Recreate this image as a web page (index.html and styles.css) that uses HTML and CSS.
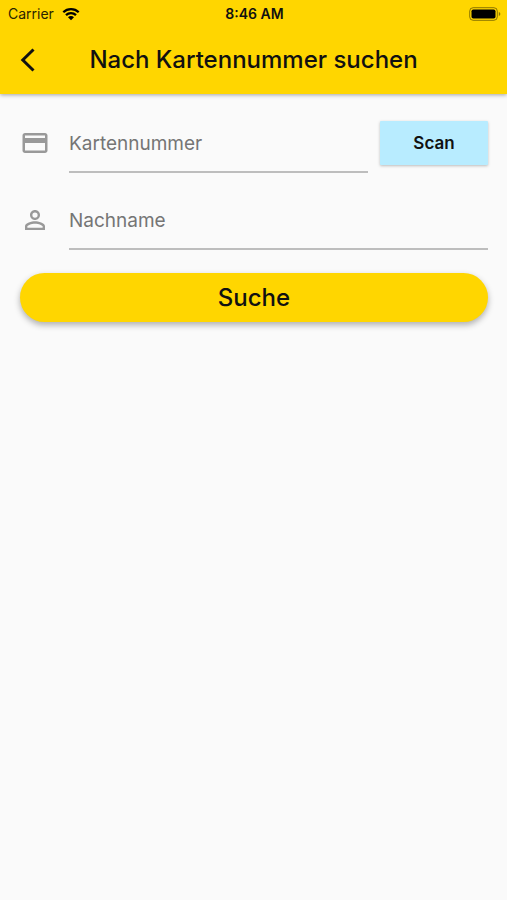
FILE: index.html
```html
<!DOCTYPE html>
<html lang="de">
<head>
<meta charset="utf-8">
<meta name="viewport" content="width=device-width, initial-scale=1">
<title>Nach Kartennummer suchen</title>
<link rel="stylesheet" href="styles.css">
</head>
<body>
<header class="top">
  <div class="status">
    <div class="carrier">
      <span>Carrier</span>
      <svg class="wifi" viewBox="0 0 18 14" aria-hidden="true">
        <path d="M1.3 5.2a11 11 0 0 1 15.4 0M4 8.1a7.1 7.1 0 0 1 10 0" fill="none" stroke="currentColor" stroke-width="2.3"/>
        <path d="M9 13.2 6 10.3a4.2 4.2 0 0 1 6 0z" fill="currentColor"/>
      </svg>
    </div>
    <span class="clock">8:46 AM</span>
    <svg class="battery" viewBox="0 0 32 14" aria-hidden="true">
      <rect x=".7" y=".7" width="27.6" height="12.6" rx="3.5" fill="none" stroke="currentColor" opacity=".45"/>
      <rect x="2.5" y="2.5" width="24" height="9" rx="1.8" fill="currentColor"/>
      <path d="M29.8 5v4q1.6-.6 1.6-2t-1.6-2z" fill="currentColor" opacity=".45"/>
    </svg>
  </div>
  <div class="bar">
    <button class="back" type="button" aria-label="Zurück">
      <svg viewBox="0 0 16 24" aria-hidden="true"><path d="M13.5 1.500 2.800 12l10.700 10.500" fill="none" stroke="currentColor" stroke-width="3"/></svg>
    </button>
    <h1 class="title">Nach Kartennummer suchen</h1>
  </div>
</header>
<main>
  <form class="form">
    <div class="row">
      <label class="icon" for="card" aria-label="Kartennummer">
        <svg viewBox="0 0 24 24" aria-hidden="true"><path fill="currentColor" d="M20 4H4c-1.11 0-1.99.89-1.99 2L2 18c0 1.11.89 2 2 2h16c1.11 0 2-.89 2-2V6c0-1.11-.89-2-2-2zm0 14H4v-6h16v6zm0-10H4V6h16v2z"/></svg>
      </label>
      <input class="field" id="card" type="text" placeholder="Kartennummer">
      <button class="scan" type="button">Scan</button>
    </div>
    <div class="row">
      <label class="icon" for="name" aria-label="Nachname">
        <svg viewBox="0 0 24 24" aria-hidden="true"><path fill="currentColor" d="M12 5.9a2.1 2.1 0 1 1 0 4.2 2.1 2.1 0 0 1 0-4.2m0 9c2.97 0 6.1 1.46 6.1 2.1v1.1H5.9V17c0-.64 3.13-2.1 6.1-2.1M12 4C9.79 4 8 5.79 8 8s1.79 4 4 4 4-1.79 4-4-1.79-4-4-4zm0 9c-2.67 0-8 1.34-8 4v3h16v-3c0-2.66-5.33-4-8-4z"/></svg>
      </label>
      <input class="field" id="name" type="text" placeholder="Nachname">
    </div>
    <button class="submit" type="button">Suche</button>
  </form>
</main>
</body>
</html>
```
FILE: styles.css
```css
* {
  box-sizing: border-box;
}

body {
  margin: 0;
  background: #fafafa;
  color: #111;
  font-family: Inter, "Liberation Sans", sans-serif;
}

button,
input {
  font: inherit;
  color: inherit;
  border: 0;
  padding: 0;
}

svg {
  display: block;
}

.top {
  background: #ffd600;
  box-shadow: 0 1px 4px rgba(0, 0, 0, 0.35);
}

.status {
  display: grid;
  grid-template-columns: 1fr auto 1fr;
  align-items: center;
  height: 27px;
  padding: 0 6px 0 8px;
  font-size: 14px;
}

.carrier {
  display: flex;
  align-items: center;
  gap: 8px;
  color: #2a2400;
}

.wifi {
  width: 18px;
  height: 14px;
  color: #000;
}

.clock {
  font-weight: 600;
}

.battery {
  width: 32px;
  height: 14px;
  justify-self: end;
  color: #000;
}

.bar {
  display: grid;
  grid-template-columns: 56px 1fr 56px;
  align-items: center;
  height: 67px;
  padding-bottom: 2px;
}

.back {
  height: 48px;
  padding-left: 20px;
  background: none;
}

.back svg {
  width: 16px;
  height: 24px;
}

.title {
  margin: 0;
  font-size: 24px;
  font-weight: 500;
  text-align: center;
  white-space: nowrap;
}

.form {
  display: flex;
  flex-direction: column;
  gap: 17px;
  padding: 19px 19px 19px 20px;
}

.row {
  display: flex;
  align-items: center;
}

.icon {
  flex: none;
  margin-right: 19px;
  color: #999;
}

.icon svg {
  width: 30px;
  height: 30px;
}

.field {
  flex: 1;
  min-width: 0;
  height: 60px;
  padding-top: 2px;
  border-bottom: 2px solid #bdbdbd;
  border-radius: 0;
  background: none;
  font-size: 19px;
  outline: none;
}

.field::placeholder {
  color: #757575;
  opacity: 1;
}

.scan {
  width: 108px;
  height: 44px;
  margin-left: 12px;
  border-radius: 1px;
  background: #b8ecff;
  box-shadow: 0 1px 3px rgba(0, 0, 0, 0.25);
  font-size: 17px;
  font-weight: 600;
}

.submit {
  height: 49px;
  margin-top: 6px;
  border-radius: 25px;
  background: #ffd600;
  box-shadow: 0 3px 6px rgba(0, 0, 0, 0.3);
  font-size: 24px;
  font-weight: 500;
}
```
